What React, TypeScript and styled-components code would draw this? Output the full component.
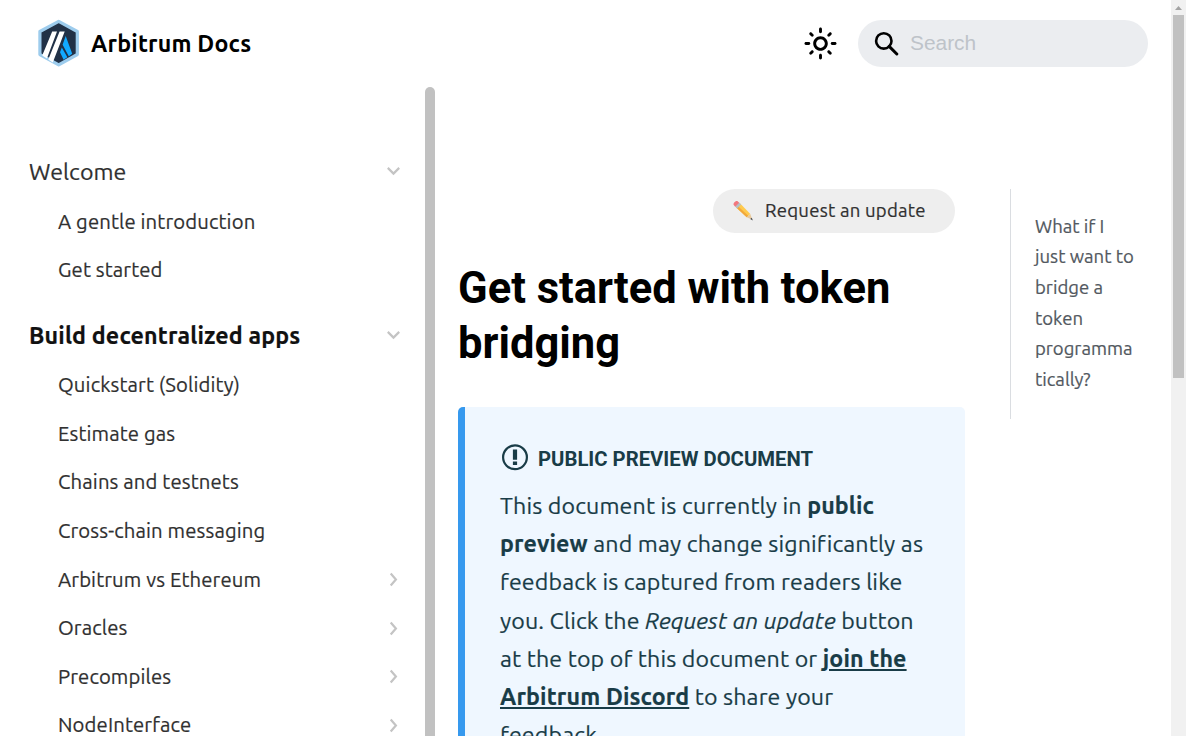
import React from "react";
import styled, { createGlobalStyle } from "styled-components";

const GlobalStyle = createGlobalStyle`
  *, *::before, *::after { box-sizing: border-box; }
  html, body { margin: 0; height: 100%; overflow: hidden; background: #fff; }
  body { font-family: Ubuntu, "Noto Sans", sans-serif; color: #1c1e21; }
`;

const Page = styled.div`
  display: flex;
  width: 1186px;
  height: 736px;
  overflow: hidden;
`;

const Site = styled.div`
  display: flex;
  flex-direction: column;
  width: 1171px;
`;

const Scrollbar = styled.div`
  display: flex;
  flex-direction: column;
  align-items: center;
  width: 15px;
  background: #f1f1f1;
`;

const ScrollArrow = styled.svg`
  display: block;
  width: 15px;
  height: 15px;
`;

const ScrollThumb = styled.div`
  width: 11px;
  height: 363px;
  background: #c1c1c1;
`;

const Navbar = styled.header`
  display: flex;
  align-items: center;
  justify-content: space-between;
  height: 87px;
  padding: 0 23px 0 37px;
`;

const Brand = styled.a`
  display: flex;
  align-items: center;
  gap: 11px;
  color: #000;
`;

const BrandName = styled.span`
  padding-bottom: 2px;
  font-size: 23.2px;
  font-weight: 700;
  letter-spacing: 0.18px;
  white-space: nowrap;
`;

const NavTools = styled.div`
  display: flex;
  align-items: center;
  gap: 20px;
`;

const SearchBox = styled.div`
  display: flex;
  align-items: center;
  gap: 11px;
  width: 290px;
  height: 47px;
  padding: 0 0 1px 16px;
  border-radius: 24px;
  background: #ebedf0;
  color: #bec3c9;
  font: 20.88px "Liberation Sans", Arial, sans-serif;
`;

const Body = styled.div`
  display: flex;
  flex: 1;
  min-height: 0;
`;

const Sidebar = styled.nav`
  display: flex;
  flex-direction: column;
  width: 425px;
  padding: 58px 22px 0 29px;
  overflow: hidden;
`;

const SidebarThumb = styled.div`
  width: 10px;
  border-radius: 5px 5px 0 0;
  background: #c1c1c1;
`;

const Section = styled.section`
  margin-bottom: 14.7px;
`;

const Category = styled.div<{ $active?: boolean }>`
  display: flex;
  align-items: center;
  justify-content: space-between;
  height: 51.9px;
  font-size: 23.2px;
  font-weight: ${(p) => (p.$active ? 700 : 400)};
  color: ${(p) => (p.$active ? "#111" : "#303030")};
  letter-spacing: ${(p) => (p.$active ? 0.17 : 0.05)}px;
  white-space: nowrap;
  -webkit-text-stroke: 0.2px currentColor;
`;

const Item = styled.div`
  display: flex;
  align-items: center;
  justify-content: space-between;
  height: 48.55px;
  padding-left: 29px;
  font-size: 20.3px;
  letter-spacing: 0.13px;
  color: #303030;
  white-space: nowrap;
  -webkit-text-stroke: 0.2px currentColor;
`;

const Main = styled.main`
  display: flex;
  flex-direction: column;
  width: 507px;
  margin-left: 23px;
  padding-top: 102px;
`;

const UpdateButton = styled.a`
  display: flex;
  flex: none;
  align-items: center;
  align-self: flex-end;
  width: 242px;
  height: 44px;
  margin-right: 10px;
  padding: 0 0 1px 19px;
  border-radius: 22px;
  background: #eee;
  color: #303030;
  font-size: 18.56px;
  letter-spacing: 0.24px;
  white-space: nowrap;
  -webkit-text-stroke: 0.2px currentColor;
`;

const UpdateLabel = styled.span`
  margin-left: 11px;
`;

const Title = styled.h1`
  margin: 28px 0 36px;
  font: 700 43.5px/55px Roboto, sans-serif;
  color: #000;
  white-space: nowrap;
`;

const Alert = styled.div`
  height: 420px;
  flex: none;
  padding: 35px 0 0 35px;
  border-left: 7px solid #3699ee;
  border-radius: 5px;
  background: #eff7ff;
  color: #193c47;
`;

const AlertHeading = styled.div`
  display: flex;
  align-items: center;
  gap: 8px;
  height: 34px;
  font: 700 20.3px/34px Roboto, sans-serif;
  white-space: nowrap;
`;

const AlertText = styled.p`
  margin: 9.8px 0 0;
  font-size: 23.2px;
  line-height: 38.28px;
  letter-spacing: 0.13px;
  -webkit-text-stroke: 0.2px currentColor;
`;

const DiscordLink = styled.a`
  font-weight: 700;
  text-decoration: underline;
`;

const Toc = styled.aside`
  width: 126px;
  height: 230px;
  margin: 102px 0 0 45px;
  padding: 22.8px 0 0 24px;
  border-left: 1px solid #dadde1;
  color: #525860;
  font-size: 18.56px;
  line-height: 30.62px;
  overflow-wrap: break-word;
  -webkit-text-stroke: 0.2px currentColor;
`;

const Logo = () => (
  <svg width="43" height="49" viewBox="0 0 43 49">
    <path d="M21.7 2.3 40.3 12.5V35.5L21.7 45.9 2.9 35.5V12.5Z" fill="#213147" stroke="#9dcced" strokeWidth="3.2" strokeLinejoin="round" />
    <path d="M25.6 25.8 28.7 17 35.2 34.8 31.8 37.3ZM23 33.2 24.8 28.6 30.4 38.2 26.6 40.8Z" fill="#12aaff" />
    <path d="M15.2 12.4H20L9.9 39.4 5.2 36.4ZM22.6 12.4H27.7L15.8 43.4 11.3 40.6Z" fill="#fff" />
  </svg>
);

const Sun = () => (
  <svg width="35" height="35" viewBox="0 0 24 24" fill="#000">
    <path d="M12,9c1.65,0,3,1.35,3,3s-1.35,3-3,3s-3-1.35-3-3S10.35,9,12,9 M12,7c-2.76,0-5,2.24-5,5s2.24,5,5,5s5-2.24,5-5 S14.76,7,12,7L12,7z M2,13l2,0c0.55,0,1-0.45,1-1s-0.45-1-1-1l-2,0c-0.55,0-1,0.45-1,1S1.45,13,2,13z M20,13l2,0c0.55,0,1-0.45,1-1 s-0.45-1-1-1l-2,0c-0.55,0-1,0.45-1,1S19.45,13,20,13z M11,2v2c0,0.55,0.45,1,1,1s1-0.45,1-1V2c0-0.55-0.45-1-1-1S11,1.45,11,2z M11,20v2c0,0.55,0.45,1,1,1s1-0.45,1-1v-2c0-0.55-0.45-1-1-1C11.45,19,11,19.45,11,20z M5.99,4.58c-0.39-0.39-1.03-0.39-1.41,0 c-0.39,0.39-0.39,1.03,0,1.41l1.06,1.06c0.39,0.39,1.03,0.39,1.41,0s0.39-1.03,0-1.41L5.99,4.58z M18.36,16.95 c-0.39-0.39-1.03-0.39-1.41,0c-0.39,0.39-0.39,1.03,0,1.41l1.06,1.06c0.39,0.39,1.03,0.39,1.41,0c0.39-0.39,0.39-1.03,0-1.41 L18.36,16.95z M19.42,5.99c0.39-0.39,0.39-1.03,0-1.41c-0.39-0.39-1.03-0.39-1.41,0l-1.06,1.06c-0.39,0.39-0.39,1.03,0,1.41 s1.03,0.39,1.41,0L19.42,5.99z M7.05,18.36c0.39-0.39,0.39-1.03,0-1.41c-0.39-0.39-1.03-0.39-1.41,0l-1.06,1.06 c-0.39,0.39-0.39,1.03,0,1.41s1.03,0.39,1.41,0L7.05,18.36z" />
  </svg>
);

const SearchIcon = () => (
  <svg width="25" height="25" viewBox="0 0 25 25" fill="none" stroke="#000">
    <circle cx="9.8" cy="9.9" r="7.7" strokeWidth="2.6" />
    <path d="m15.2 15.4 7.6 7.6" strokeWidth="3" strokeLinecap="round" />
  </svg>
);

const Chevron = ({ open }: { open?: boolean }) => (
  <svg width="19" height="18" viewBox="0 0 19 18" fill="none" stroke="#c4c4c4" strokeWidth="2.2">
    <path d={open ? "m3.8 5.9 5.7 5.7 5.7-5.7" : "m6.7 3.5 5.2 6-5.2 6"} />
  </svg>
);

const Pencil = () => (
  <svg width="22" height="22" viewBox="0 0 22 22">
    <path d="M4.2 7.6 8.2 3.6 18.3 13.9 14.7 17.3Z" fill="#ffca4d" />
    <path d="M4.2 7.6 5.8 6 16.5 16 14.7 17.3Z" fill="#f2a83b" />
    <path d="M14.7 17.3 18.3 13.9 20.4 19.8Z" fill="#e8c99c" />
    <path d="m18.2 19 1.6-1.2 1 2.6Z" fill="#454b50" />
    <path d="m2.9 6.2 4-4 2.2 2.2-4 4Z" fill="#b5c0c5" />
    <path d="M1.8 5.1C.4 3.5 3.9.1 5.6 1.2l1.6 1.5-4 4Z" fill="#f2777d" />
  </svg>
);

const InfoIcon = () => (
  <svg width="30" height="30" viewBox="0 0 30 30" fill="none" stroke="currentColor">
    <circle cx="15" cy="13.3" r="11.9" strokeWidth="2.2" />
    <path d="M15 5.4V15.8M15 17.4V20.9" strokeWidth="4.2" />
  </svg>
);

type Entry = { label: string; nested?: boolean };

const welcome: Entry[] = [{ label: "A gentle introduction" }, { label: "Get started" }];

const build: Entry[] = [
  { label: "Quickstart (Solidity)" },
  { label: "Estimate gas" },
  { label: "Chains and testnets" },
  { label: "Cross-chain messaging" },
  { label: "Arbitrum vs Ethereum", nested: true },
  { label: "Oracles", nested: true },
  { label: "Precompiles", nested: true },
  { label: "NodeInterface", nested: true },
];

const Items = ({ entries }: { entries: Entry[] }) => (
  <>
    {entries.map((e) => (
      <Item key={e.label}>
        <span>{e.label}</span>
        {e.nested && <Chevron />}
      </Item>
    ))}
  </>
);

export default function App() {
  return (
    <Page>
      <GlobalStyle />
      <Site>
        <Navbar>
          <Brand>
            <Logo />
            <BrandName>Arbitrum Docs</BrandName>
          </Brand>
          <NavTools>
            <Sun />
            <SearchBox>
              <SearchIcon />
              <span>Search</span>
            </SearchBox>
          </NavTools>
        </Navbar>
        <Body>
          <Sidebar>
            <Section>
              <Category>
                <span>Welcome</span>
                <Chevron open />
              </Category>
              <Items entries={welcome} />
            </Section>
            <Section>
              <Category $active>
                <span>Build decentralized apps</span>
                <Chevron open />
              </Category>
              <Items entries={build} />
            </Section>
          </Sidebar>
          <SidebarThumb />
          <Main>
            <UpdateButton>
              <Pencil />
              <UpdateLabel>Request an update</UpdateLabel>
            </UpdateButton>
            <Title>
              Get started with token
              <br />
              bridging
            </Title>
            <Alert>
              <AlertHeading>
                <InfoIcon />
                PUBLIC PREVIEW DOCUMENT
              </AlertHeading>
              <AlertText>
                This document is currently in <b>public
                <br />
                preview</b> and may change significantly as
                <br />
                feedback is captured from readers like
                <br />
                you. Click the <em>Request an update</em> button
                <br />
                at the top of this document or{" "}
                <DiscordLink>
                  join the
                  <br />
                  Arbitrum Discord
                </DiscordLink>{" "}
                to share your
                <br />
                feedback.
              </AlertText>
            </Alert>
          </Main>
          <Toc>What if I just want to bridge a token programmatically?</Toc>
        </Body>
      </Site>
      <Scrollbar>
        <ScrollArrow viewBox="0 0 15 15">
          <path d="M7.5 6 11 10H4Z" fill="#a3a3a3" />
        </ScrollArrow>
        <ScrollThumb />
      </Scrollbar>
    </Page>
  );
}
